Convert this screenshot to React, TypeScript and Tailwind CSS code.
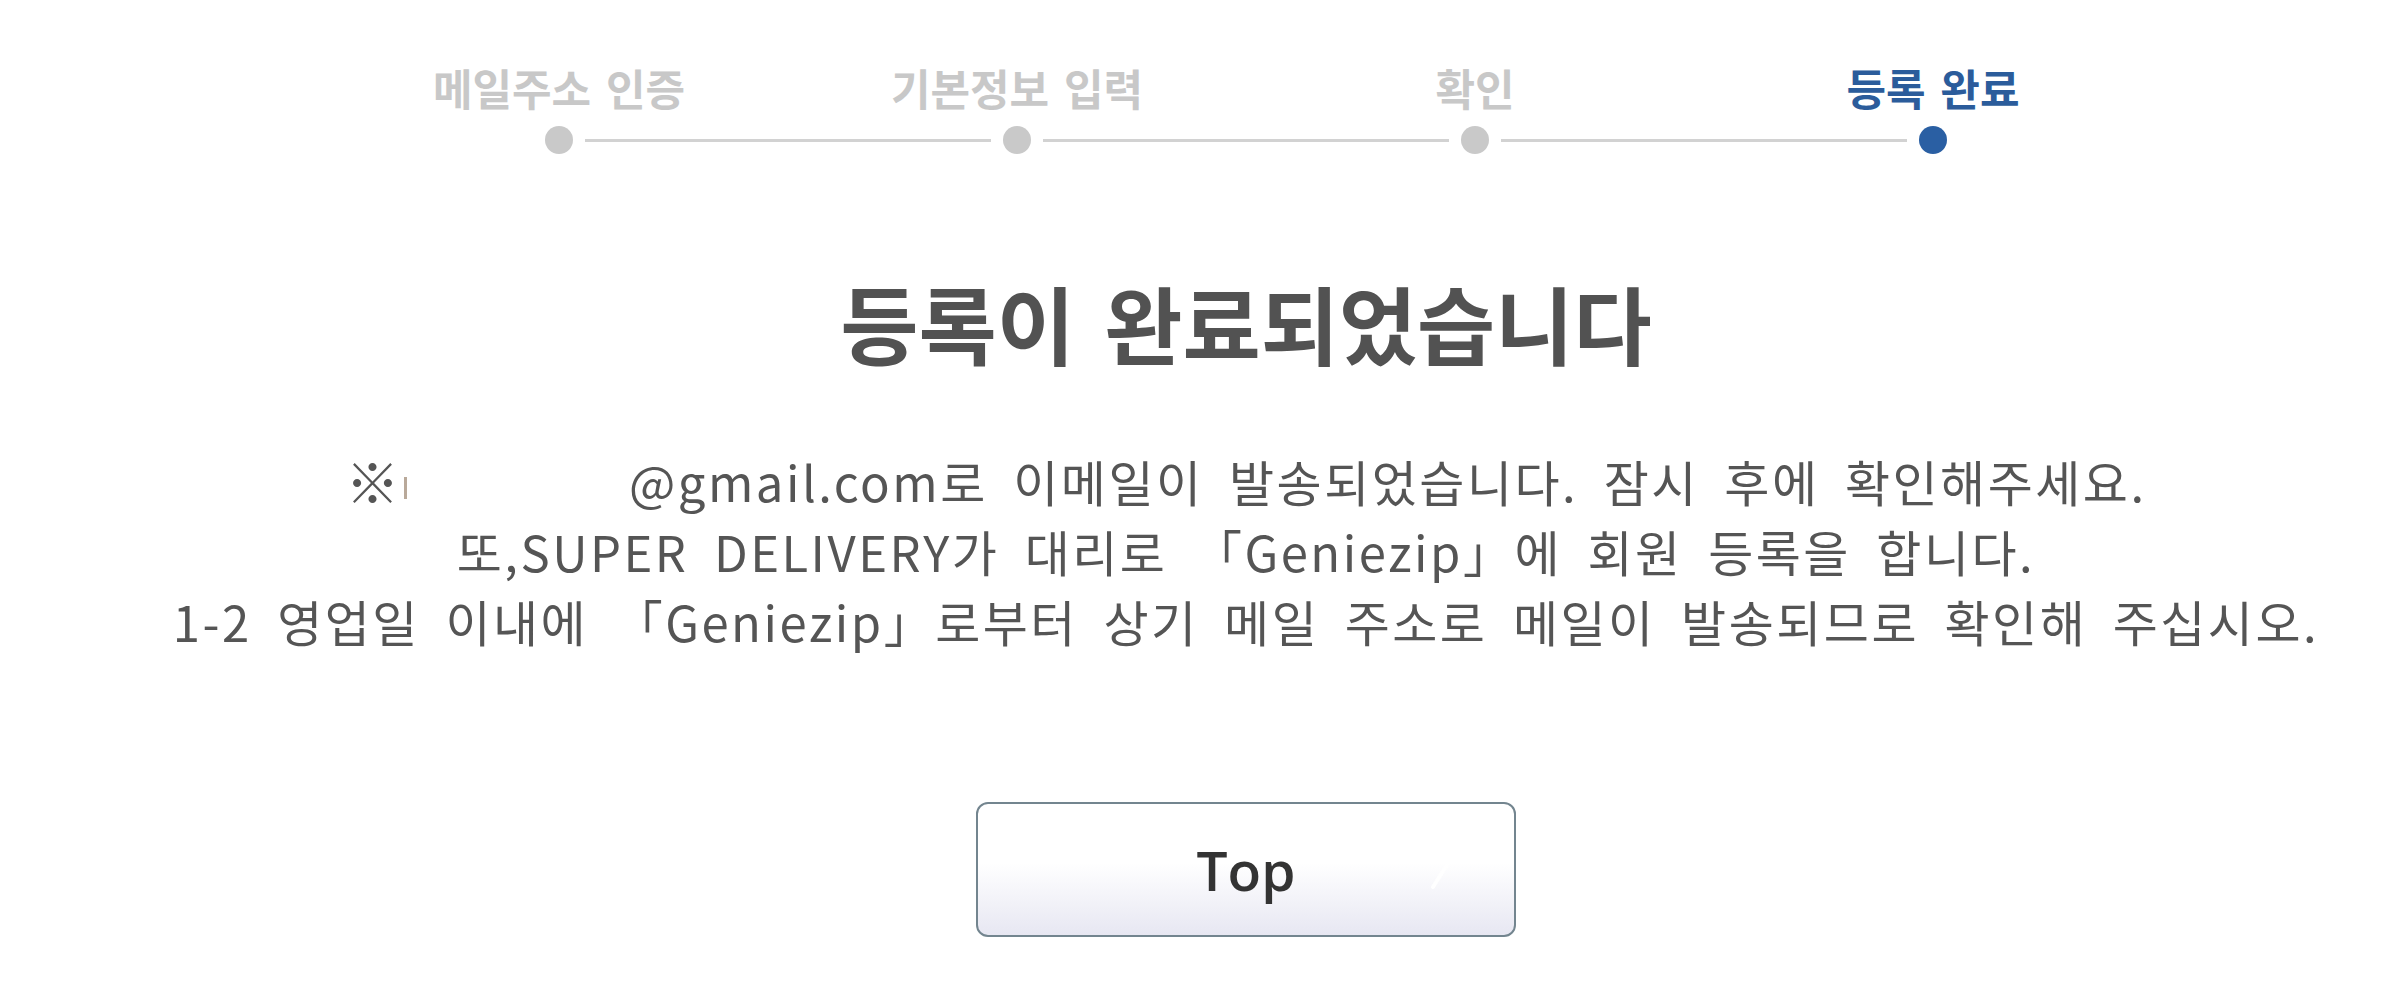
import React from 'react';

const steps = [
  { label: '메일주소 인증', active: false },
  { label: '기본정보 입력', active: false },
  { label: '확인', active: false },
  { label: '등록 완료', active: true },
];

export default function App() {
  return (
    <div className="flex min-h-[1001px] w-full flex-col items-center bg-white pl-[106px] pt-[65px] font-['Noto_Sans_CJK_KR','Noto_Sans',sans-serif]">
      {/* Stepper */}
      <div className="grid w-[1832px] grid-cols-4">
        {steps.map((s, i) => (
          <div key={i} className="flex flex-col items-center">
            <div
              className={`whitespace-nowrap text-[43px] font-bold leading-[44px] [word-spacing:5px] ${
                s.active ? 'text-[#2b5c9b]' : 'text-[#c8c8c8]'
              }`}
            >
              {s.label}
            </div>
            <div className="mt-[17px] flex w-full items-center">
              <div className={`mr-[12px] h-[3px] flex-1 ${i === 0 ? 'bg-transparent' : 'bg-[#d2d2d2]'}`} />
              <div className={`h-[28px] w-[28px] rounded-full ${s.active ? 'bg-[#2a5fa3]' : 'bg-[#c9c9c9]'}`} />
              <div className={`ml-[12px] h-[3px] flex-1 ${i === steps.length - 1 ? 'bg-transparent' : 'bg-[#d2d2d2]'}`} />
            </div>
          </div>
        ))}
      </div>

      {/* Title */}
      <h1 className="mt-[120px] whitespace-nowrap text-[85px] font-bold leading-[96px] text-[#525252] [word-spacing:10px]">
        등록이 완료되었습니다
      </h1>

      {/* Body */}
      <div className="mt-[76px] whitespace-nowrap text-center text-[49px] leading-[70px] tracking-[2.5px] text-[#555555] [word-spacing:12px]">
        <div className="flex items-center justify-center">
          <span className="text-[54px] leading-[70px]">※</span>
          <span className="ml-[2px] mt-[14px] inline-block h-[22px] w-[3px] bg-[#b9a99a]" />
          <span className="inline-block w-[222px]" />
          <span>@gmail.com로 이메일이 발송되었습니다. 잠시 후에 확인해주세요.</span>
        </div>
        <div>또,SUPER DELIVERY가 대리로 「Geniezip」에 회원 등록을 합니다.</div>
        <div>1-2 영업일 이내에 「Geniezip」로부터 상기 메일 주소로 메일이 발송되므로 확인해 주십시오.</div>
      </div>

      {/* Button */}
      <button
        type="button"
        className="relative mt-[146px] flex h-[135px] w-[540px] items-center justify-center rounded-[12px] border-2 border-[#73858f] bg-linear-to-b from-white from-45% to-[#e7e7f2]"
      >
        <span className="font-['Open_Sans',sans-serif] text-[55px] font-semibold leading-none text-[#333333]">Top</span>
        <svg
          className="absolute right-[58px] top-[20px]"
          width="26"
          height="66"
          viewBox="0 0 26 66"
          fill="none"
        >
          <path d="M3 3 L22 33 L3 63" stroke="#ffffff" strokeWidth="4" strokeLinecap="round" strokeLinejoin="round" />
        </svg>
      </button>
    </div>
  );
}
